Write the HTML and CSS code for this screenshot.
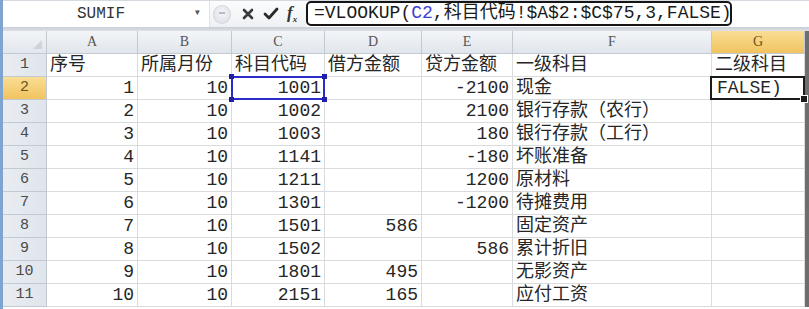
FILE: index.html
```html
<!DOCTYPE html>
<html lang="zh-CN">
<head>
    <meta charset="UTF-8">
    <title>VLOOKUP</title>
    <link rel="stylesheet" href="styles.css">
</head>
<body>
    <div class="sheet">
        <div class="formula-bar">
            <div class="name-box">
                <span class="name">SUMIF</span>
                <span class="drop">&#9662;</span>
            </div>
            <div class="tools">
                <span class="knob"></span>
                <svg class="icon" width="14" height="14" viewBox="0 0 14 14">
                    <path d="M3 3 L11 11 M11 3 L3 11" stroke="#3a3a3a" stroke-width="2.6" stroke-linecap="round"/>
                </svg>
                <svg class="icon" width="16" height="14" viewBox="0 0 16 14">
                    <path d="M2 7 L6 11 L14 2" stroke="#2a2a2a" stroke-width="2.8" fill="none" stroke-linecap="round" stroke-linejoin="round"/>
                </svg>
                <span class="fx">f<sub>x</sub></span>
            </div>
            <div class="formula">=VLOOKUP(<span class="ref">C2</span>,科目代码!$A$2:$C$75,3,FALSE)</div>
        </div>
        <div class="band"></div>
        <div class="grid">
            <div class="corner"><span class="tri"></span></div>
            <div class="col">A</div>
            <div class="col">B</div>
            <div class="col">C</div>
            <div class="col">D</div>
            <div class="col">E</div>
            <div class="col">F</div>
            <div class="col on">G</div>

            <div class="rh">1</div>
            <div class="c">序号</div>
            <div class="c">所属月份</div>
            <div class="c">科目代码</div>
            <div class="c">借方金额</div>
            <div class="c">贷方金额</div>
            <div class="c">一级科目</div>
            <div class="c">二级科目</div>

            <div class="rh on">2</div>
            <div class="n">1</div>
            <div class="n">10</div>
            <div class="n pick">1001<span class="h tl"></span><span class="h tr"></span><span class="h bl"></span><span class="h br"></span></div>
            <div class="n"></div>
            <div class="n">-2100</div>
            <div class="c">现金</div>
            <div class="c active">FALSE)<span class="fill"></span></div>

            <div class="rh">3</div>
            <div class="n">2</div>
            <div class="n">10</div>
            <div class="n">1002</div>
            <div class="n"></div>
            <div class="n">2100</div>
            <div class="c">银行存款（农行）</div>
            <div class="c"></div>

            <div class="rh">4</div>
            <div class="n">3</div>
            <div class="n">10</div>
            <div class="n">1003</div>
            <div class="n"></div>
            <div class="n">180</div>
            <div class="c">银行存款（工行）</div>
            <div class="c"></div>

            <div class="rh">5</div>
            <div class="n">4</div>
            <div class="n">10</div>
            <div class="n">1141</div>
            <div class="n"></div>
            <div class="n">-180</div>
            <div class="c">坏账准备</div>
            <div class="c"></div>

            <div class="rh">6</div>
            <div class="n">5</div>
            <div class="n">10</div>
            <div class="n">1211</div>
            <div class="n"></div>
            <div class="n">1200</div>
            <div class="c">原材料</div>
            <div class="c"></div>

            <div class="rh">7</div>
            <div class="n">6</div>
            <div class="n">10</div>
            <div class="n">1301</div>
            <div class="n"></div>
            <div class="n">-1200</div>
            <div class="c">待摊费用</div>
            <div class="c"></div>

            <div class="rh">8</div>
            <div class="n">7</div>
            <div class="n">10</div>
            <div class="n">1501</div>
            <div class="n">586</div>
            <div class="n"></div>
            <div class="c">固定资产</div>
            <div class="c"></div>

            <div class="rh">9</div>
            <div class="n">8</div>
            <div class="n">10</div>
            <div class="n">1502</div>
            <div class="n"></div>
            <div class="n">586</div>
            <div class="c">累计折旧</div>
            <div class="c"></div>

            <div class="rh">10</div>
            <div class="n">9</div>
            <div class="n">10</div>
            <div class="n">1801</div>
            <div class="n">495</div>
            <div class="n"></div>
            <div class="c">无影资产</div>
            <div class="c"></div>

            <div class="rh">11</div>
            <div class="n">10</div>
            <div class="n">10</div>
            <div class="n">2151</div>
            <div class="n">165</div>
            <div class="n"></div>
            <div class="c">应付工资</div>
            <div class="c"></div>
        </div>
    </div>
</body>
</html>
```

FILE: styles.css
```css
body {
    margin: 0;
    background-color: #ffffff;
    overflow: hidden;
}

.sheet {
    width: 809px;
    height: 309px;
    box-sizing: border-box;
    border-left: 3px solid #7fa4cf;
    font-family: "Liberation Mono", "Noto Sans CJK SC", monospace;
    color: #262626;
    overflow: hidden;
}

.formula-bar {
    display: flex;
    height: 27px;
    background-color: #ffffff;
    border-top: 1px solid #d5dae0;
    box-sizing: border-box;
}

.name-box {
    width: 207px;
    display: flex;
    align-items: center;
    justify-content: center;
    position: relative;
    border-right: 1px solid #dfe3e8;
    box-sizing: border-box;
}

.name {
    font-size: 16px;
    color: #333333;
    margin-right: 10px;
}

.drop {
    position: absolute;
    right: 8px;
    top: 4px;
    font-size: 12px;
    color: #555555;
}

.tools {
    width: 96px;
    display: flex;
    align-items: center;
    gap: 8px;
    padding-left: 3px;
    box-sizing: border-box;
    background: linear-gradient(#fbfcfd, #eef1f4);
}

.knob {
    width: 16px;
    height: 17px;
    border-radius: 50%;
    background: radial-gradient(circle at 50% 40%, #f4f6f8, #d9dde2);
    border: 1px solid #d3d7dc;
    margin-right: 2px;
    position: relative;
}

.knob::after {
    content: "";
    position: absolute;
    left: 5px;
    top: 6px;
    width: 6px;
    height: 2px;
    background-color: #b8bcc2;
}

.icon {
    display: block;
}

.fx {
    font-family: "Liberation Serif", serif;
    font-style: italic;
    font-weight: bold;
    font-size: 17px;
    color: #333333;
}

.fx sub {
    font-size: 9px;
}

.formula {
    width: 426px;
    height: 25px;
    margin-top: 0px;
    box-sizing: border-box;
    border: 2px solid #151515;
    border-radius: 5px;
    padding-left: 6px;
    font-size: 18px;
    line-height: 21px;
    color: #1a1a1a;
    white-space: nowrap;
    overflow: hidden;
}

.ref {
    color: #3d3dd8;
}

.band {
    height: 4px;
    background: linear-gradient(#c9ced5, #dde1e6);
}

.grid {
    display: grid;
    grid-template-columns: 44px 91px 94px 93px 97px 91px 199px 93px;
    grid-template-rows: 23px;
    grid-auto-rows: 23px;
    border-right: 4px solid #6e6e6e;
}

.grid > div {
    box-sizing: border-box;
    border-right: 1px solid #d9dbdd;
    border-bottom: 1px solid #d9dbdd;
    white-space: nowrap;
    line-height: 22px;
}

.corner {
    background: linear-gradient(#f2f4f7, #e2e7ed);
    position: relative;
    border-color: #c3c9d1 !important;
}

.tri {
    position: absolute;
    right: 4px;
    bottom: 4px;
    width: 0;
    height: 0;
    border-left: 9px solid transparent;
    border-bottom: 9px solid #cfd4da;
}

.col {
    background: linear-gradient(#f3f5f8, #e1e6ec);
    border-color: #c3c9d1 !important;
    text-align: center;
    font-family: "Liberation Serif", serif;
    font-size: 14px;
    color: #555555;
}

.rh {
    background: linear-gradient(90deg, #e9edf2, #dfe5ec);
    border-color: #c3c9d1 !important;
    text-align: center;
    font-size: 15px;
    color: #4a4a4a;
}

.col.on,
.rh.on {
    background: linear-gradient(#f9de95, #f1c35f);
    color: #6b5320;
}

.c {
    font-size: 18px;
    padding-left: 3px;
    overflow: visible;
}

.n {
    font-size: 18px;
    text-align: right;
    padding-right: 3px;
}

.pick,
.active {
    position: relative;
}

.pick::after {
    content: "";
    position: absolute;
    left: -1px;
    top: -1px;
    right: -1px;
    bottom: -1px;
    border: 2px solid #2b2bc9;
}

.h {
    position: absolute;
    width: 5px;
    height: 5px;
    background-color: #1f1fa8;
    z-index: 1;
}

.tl { left: -3px; top: -3px; }
.tr { right: -3px; top: -3px; }
.bl { left: -3px; bottom: -3px; }
.br { right: -3px; bottom: -3px; }

.active {
    padding-left: 5px;
}

.active::after {
    content: "";
    position: absolute;
    left: -2px;
    top: -1px;
    right: -1px;
    bottom: -1px;
    border: 2px solid #1b1b1b;
}

.fill {
    position: absolute;
    right: -4px;
    bottom: -4px;
    width: 6px;
    height: 6px;
    background-color: #1b1b1b;
    border: 1px solid #ffffff;
    z-index: 1;
}
```
